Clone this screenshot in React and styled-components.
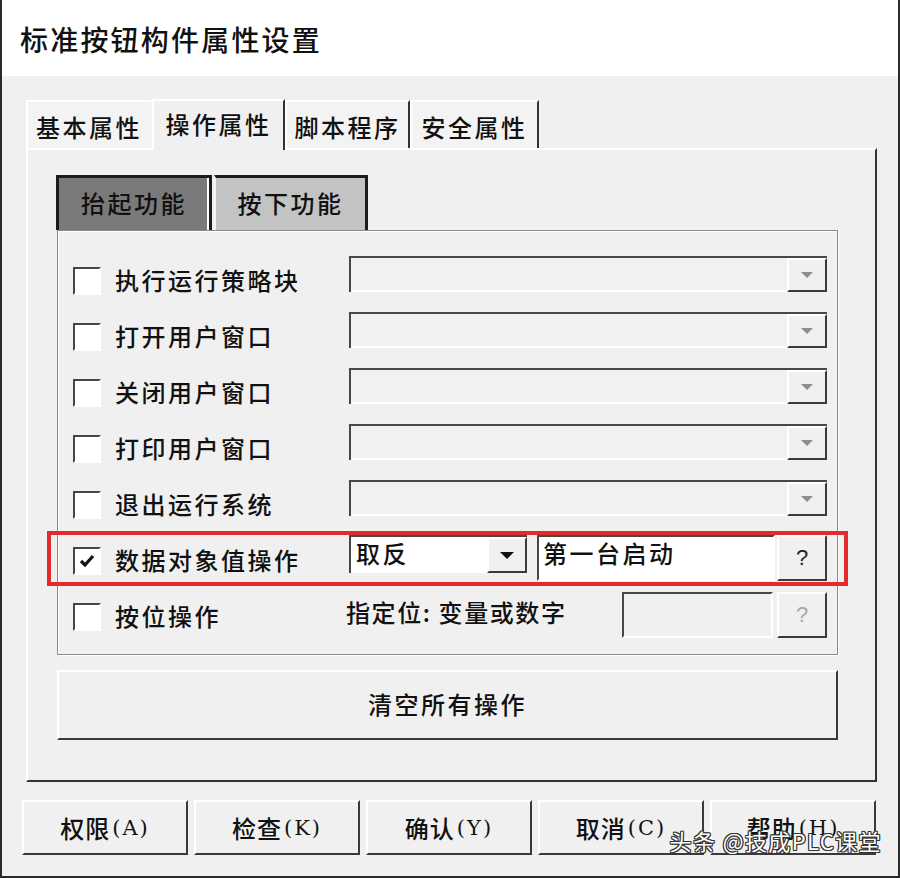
import React from 'react'
import styled, { createGlobalStyle, css } from 'styled-components'

const FONT = `"Noto Sans CJK SC", "Noto Sans", sans-serif`

const GlobalStyle = createGlobalStyle`
    * { box-sizing: border-box; }
    body {
        margin: 0;
        background: #f0f0f0;
    }
`

const raised = css`
    border-top: 2px solid #ffffff;
    border-left: 2px solid #ffffff;
    border-right: 2px solid #3a3a3a;
    border-bottom: 2px solid #3a3a3a;
`

const sunken = css`
    border-top: 2px solid #474747;
    border-left: 2px solid #474747;
    border-right: 2px solid #ffffff;
    border-bottom: 2px solid #ffffff;
`

const Window = styled.div`
    position: relative;
    width: 900px;
    height: 878px;
    background: #f0f0f0;
    border-left: 2px solid #2a2a2a;
    border-right: 2px solid #2a2a2a;
    border-bottom: 2px solid #2a2a2a;
    font-family: ${FONT};
    font-weight: 500;
    color: #111;
    display: flex;
    flex-direction: column;
`

const TitleBar = styled.div`
    height: 76px;
    background: #ffffff;
    padding: 2px 0 0 18px;
    display: flex;
    align-items: center;
    font-size: 28px;
    letter-spacing: 2.2px;
`

const TabStrip = styled.div`
    height: 72px;
    padding-left: 24px;
    display: flex;
    align-items: flex-end;
`

const Tab = styled.div`
    position: relative;
    z-index: ${(p) => (p.$active ? 2 : 1)};
    width: ${(p) => p.$width}px;
    height: ${(p) => (p.$active ? 51 : 48)}px;
    margin-bottom: ${(p) => (p.$active ? -2 : 0)}px;
    padding: ${(p) => (p.$active ? '0 0 4px' : '2px 0 0')};
    background: ${(p) => (p.$active ? '#f0f0f0' : '#f3f3f3')};
    border-top: 2px solid #ffffff;
    border-left: 2px solid #ffffff;
    border-right: 2px solid ${(p) => (p.$edge ? '#333' : 'transparent')};
    display: flex;
    align-items: center;
    justify-content: center;
    font-size: 24px;
    letter-spacing: 2.5px;
`

const Panel = styled.div`
    width: 851px;
    height: 634px;
    margin-left: 24px;
    padding: 25px 0 0 29px;
    border-top: 2px solid #ffffff;
    border-left: 2px solid #ffffff;
    border-right: 2px solid #333;
    border-bottom: 2px solid #333;
`

const SubTabs = styled.div`
    display: flex;
    gap: 2px;
    height: 55px;
    margin-left: -1px;
`

const SubTab = styled.div`
    width: ${(p) => p.$width}px;
    height: 55px;
    padding-bottom: 3px;
    background: ${(p) => (p.$active ? '#7a7a7a' : '#c3c3c3')};
    border-top: 3px solid #1c1c1c;
    border-left: ${(p) => (p.$active ? '3px solid #1c1c1c' : '2px solid #f4f4f4')};
    border-right: 3px solid #1c1c1c;
    box-shadow: ${(p) => (p.$active ? 'inset -2px 0 0 #ffffff' : 'none')};
    display: flex;
    align-items: center;
    justify-content: center;
    font-size: 24px;
    letter-spacing: 2.5px;
`

const GroupBox = styled.div`
    width: 781px;
    height: 425px;
    border: 1px solid #8a8a8a;
    box-shadow: 1px 1px 0 #ffffff, inset 1px 1px 0 #ffffff;
    padding: 23px 10px 0 15px;
`

const Row = styled.div`
    position: relative;
    height: 56px;
    display: flex;
    align-items: flex-start;
`

const Highlight = styled.div`
    position: absolute;
    left: -26px;
    right: -21px;
    top: -3px;
    bottom: 4px;
    border: 4px solid #e22b2b;
    pointer-events: none;
`

const CheckBox = styled.div`
    width: 28px;
    height: 28px;
    margin-top: 13px;
    background: #ffffff;
    ${sunken}
    display: flex;
    align-items: center;
    justify-content: center;
`

const Label = styled.div`
    width: 234px;
    margin-left: 14px;
    line-height: 52px;
    font-size: 24px;
    letter-spacing: 2.5px;
    white-space: nowrap;
`

const Controls = styled.div`
    flex: 1;
    display: flex;
    align-items: flex-start;
    gap: ${(p) => p.$gap || 0}px;
`

const Combo = styled.div`
    display: flex;
    width: ${(p) => (p.$width ? `${p.$width}px` : '100%')};
    height: ${(p) => p.$height}px;
    margin-top: ${(p) => p.$top}px;
    background: ${(p) => (p.$enabled ? '#ffffff' : '#f1f1f1')};
    border-top: 2px solid #474747;
    border-left: 2px solid #474747;
`

const ComboText = styled.div`
    flex: 1;
    padding: 0 0 3px 5px;
    border-bottom: 2px solid #ffffff;
    font-size: 24px;
    letter-spacing: 2.5px;
    display: flex;
    align-items: center;
`

const ComboButton = styled.div`
    width: 40px;
    height: 100%;
    background: #f0f0f0;
    ${raised}
    display: flex;
    align-items: center;
    justify-content: center;
`

const Arrow = styled.span`
    width: 0;
    height: 0;
    border-left: ${(p) => (p.$enabled ? 7 : 6)}px solid transparent;
    border-right: ${(p) => (p.$enabled ? 7 : 6)}px solid transparent;
    border-top: ${(p) => (p.$enabled ? 7 : 6)}px solid ${(p) => (p.$enabled ? '#111' : '#8c8c8c')};
`

const TextField = styled.div`
    width: ${(p) => p.$width}px;
    height: 46px;
    margin-top: ${(p) => p.$top}px;
    margin-left: ${(p) => (p.$push ? 'auto' : '0')};
    background: ${(p) => (p.$enabled ? '#ffffff' : '#f0f0f0')};
    ${sunken}
    padding: 2px 0 0 4px;
    font-size: 24px;
    line-height: 28px;
    letter-spacing: 2.5px;
`

const QButton = styled.div`
    width: 50px;
    height: 46px;
    margin-top: ${(p) => p.$top}px;
    background: #f0f0f0;
    ${raised}
    display: flex;
    align-items: center;
    justify-content: center;
    font-family: "Liberation Sans", Arial, sans-serif;
    font-weight: 400;
    font-size: 22px;
    color: ${(p) => (p.$disabled ? '#a8a8a8' : '#222')};
`

const Hint = styled.div`
    margin-left: -3px;
    line-height: 44px;
    font-size: 24px;
    letter-spacing: 1.6px;
    white-space: nowrap;
`

const ClearButton = styled.div`
    width: 781px;
    height: 70px;
    margin-top: 15px;
    padding-bottom: 4px;
    ${raised}
    display: flex;
    align-items: center;
    justify-content: center;
    font-size: 24px;
    letter-spacing: 2.5px;
`

const ButtonBar = styled.div`
    display: flex;
    gap: 6px;
    margin-top: 18px;
    padding-left: 20px;
`

const DialogButton = styled.div`
    width: 166px;
    height: 55px;
    ${raised}
    display: flex;
    align-items: center;
    justify-content: center;
    font-size: 24px;
    letter-spacing: 1px;
`

const Key = styled.span`
    font-family: "DejaVu Serif", "Liberation Serif", serif;
    font-weight: 400;
    font-size: 21px;
    letter-spacing: 2px;
    margin-left: 2px;
`

const Watermark = styled.div`
    position: absolute;
    right: 16px;
    bottom: 20px;
    font-size: 22px;
    font-weight: 400;
    color: #ffffff;
    letter-spacing: 1.4px;
    text-shadow: 1px 0 0 #333, -1px 0 0 #333, 0 1px 0 #333, 0 -1px 0 #333,
        1px 1px 0 #333, -1px -1px 0 #333, 1px -1px 0 #333, -1px 1px 0 #333;
`

const Check = () => (
    <svg width="18" height="16" viewBox="0 0 18 16">
        <path d="M3 8 L7 12 L15 3" fill="none" stroke="#111" strokeWidth="3.2" />
    </svg>
)

const tabs = [
    { name: '基本属性', width: 126 },
    { name: '操作属性', width: 133, active: true, edge: true },
    { name: '脚本程序', width: 125, edge: true },
    { name: '安全属性', width: 129, edge: true },
]

const actions = ['执行运行策略块', '打开用户窗口', '关闭用户窗口', '打印用户窗口', '退出运行系统']

const buttons = [
    ['权限', 'A'],
    ['检查', 'K'],
    ['确认', 'Y'],
    ['取消', 'C'],
    ['帮助', 'H'],
]

function App () {
    return (
        <>
            <GlobalStyle />
            <Window>
                <TitleBar>标准按钮构件属性设置</TitleBar>
                <TabStrip>
                    {tabs.map((tab) => (
                        <Tab key={tab.name} $width={tab.width} $active={tab.active} $edge={tab.edge}>{tab.name}</Tab>
                    ))}
                </TabStrip>
                <Panel>
                    <SubTabs>
                        <SubTab $width={156} $active>抬起功能</SubTab>
                        <SubTab $width={154}>按下功能</SubTab>
                    </SubTabs>
                    <GroupBox>
                        {actions.map((action) => (
                            <Row key={action}>
                                <CheckBox />
                                <Label>{action}</Label>
                                <Controls>
                                    <Combo $height={36} $top={2}>
                                        <ComboText />
                                        <ComboButton><Arrow /></ComboButton>
                                    </Combo>
                                </Controls>
                            </Row>
                        ))}
                        <Row>
                            <Highlight />
                            <CheckBox><Check /></CheckBox>
                            <Label>数据对象值操作</Label>
                            <Controls>
                                <Combo $width={178} $height={38} $top={1} $enabled>
                                    <ComboText>取反</ComboText>
                                    <ComboButton><Arrow $enabled /></ComboButton>
                                </Combo>
                                <TextField $width={238} $top={1} $enabled style={{ marginLeft: 10 }}>第一台启动</TextField>
                                <QButton $top={1} style={{ marginLeft: 2 }}>?</QButton>
                            </Controls>
                        </Row>
                        <Row>
                            <CheckBox />
                            <Label>按位操作</Label>
                            <Controls $gap={4}>
                                <Hint>指定位: 变量或数字</Hint>
                                <TextField $width={151} $top={2} $push />
                                <QButton $top={2} $disabled>?</QButton>
                            </Controls>
                        </Row>
                    </GroupBox>
                    <ClearButton>清空所有操作</ClearButton>
                </Panel>
                <ButtonBar>
                    {buttons.map(([name, key]) => (
                        <DialogButton key={key}>{name}<Key>({key})</Key></DialogButton>
                    ))}
                </ButtonBar>
                <Watermark>头条 @技成PLC课堂</Watermark>
            </Window>
        </>
    )
}

export default App
